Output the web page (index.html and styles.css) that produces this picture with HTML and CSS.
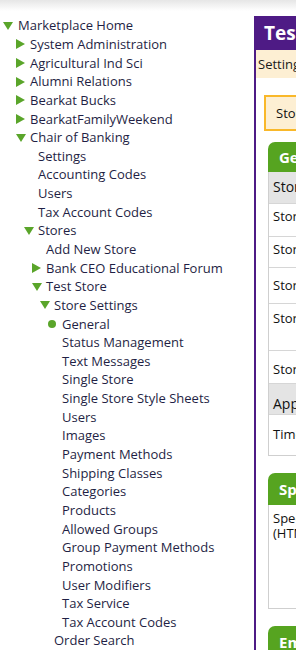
FILE: index.html
```html
<!DOCTYPE html>
<html>
<head>
<meta charset="utf-8">
<link rel="stylesheet" href="styles.css">
</head>
<body>
<div class="page">
  <nav class="sidebar">
    <ul class="tree">
      <li class="open"><span class="node"><i class="ico down"></i>Marketplace Home</span>
        <ul class="lvl1">
          <li><span class="node"><i class="ico right"></i>System Administration</span></li>
          <li><span class="node"><i class="ico right"></i>Agricultural Ind Sci</span></li>
          <li><span class="node"><i class="ico right"></i>Alumni Relations</span></li>
          <li><span class="node"><i class="ico right"></i>Bearkat Bucks</span></li>
          <li><span class="node"><i class="ico right"></i>BearkatFamilyWeekend</span></li>
          <li><span class="node"><i class="ico down"></i>Chair of Banking</span>
            <ul>
              <li><span class="node"><i class="ico"></i>Settings</span></li>
              <li><span class="node"><i class="ico"></i>Accounting Codes</span></li>
              <li><span class="node"><i class="ico"></i>Users</span></li>
              <li><span class="node"><i class="ico"></i>Tax Account Codes</span></li>
              <li><span class="node"><i class="ico down"></i>Stores</span>
                <ul>
                  <li><span class="node"><i class="ico"></i>Add New Store</span></li>
                  <li><span class="node"><i class="ico right"></i>Bank CEO Educational Forum</span></li>
                  <li><span class="node"><i class="ico down"></i>Test Store</span>
                    <ul>
                      <li><span class="node"><i class="ico down"></i>Store Settings</span>
                        <ul>
                          <li><span class="node"><i class="ico dot"></i>General</span></li>
                          <li><span class="node"><i class="ico"></i>Status Management</span></li>
                          <li><span class="node"><i class="ico"></i>Text Messages</span></li>
                          <li><span class="node"><i class="ico"></i>Single Store</span></li>
                          <li><span class="node"><i class="ico"></i>Single Store Style Sheets</span></li>
                          <li><span class="node"><i class="ico"></i>Users</span></li>
                          <li><span class="node"><i class="ico"></i>Images</span></li>
                          <li><span class="node"><i class="ico"></i>Payment Methods</span></li>
                          <li><span class="node"><i class="ico"></i>Shipping Classes</span></li>
                          <li><span class="node"><i class="ico"></i>Categories</span></li>
                          <li><span class="node"><i class="ico"></i>Products</span></li>
                          <li><span class="node"><i class="ico"></i>Allowed Groups</span></li>
                          <li><span class="node"><i class="ico"></i>Group Payment Methods</span></li>
                          <li><span class="node"><i class="ico"></i>Promotions</span></li>
                          <li><span class="node"><i class="ico"></i>User Modifiers</span></li>
                          <li><span class="node"><i class="ico"></i>Tax Service</span></li>
                          <li><span class="node"><i class="ico"></i>Tax Account Codes</span></li>
                        </ul>
                      </li>
                      <li><span class="node"><i class="ico"></i>Order Search</span></li>
                    </ul>
                  </li>
                </ul>
              </li>
            </ul>
          </li>
        </ul>
      </li>
    </ul>
  </nav>

  <main class="panel">
    <h1 class="panel-title">Test Store</h1>
    <div class="crumbs">Settings &gt; General</div>
    <div class="content">
      <div class="notice">Store settings have been saved.</div>

      <section class="group">
        <h2 class="tab">General</h2>
        <div class="box">
          <div class="row head h31">Store Information</div>
          <div class="row h33">Store Name</div>
          <div class="row h31">Store Status</div>
          <div class="row h36">Store Email Address</div>
          <div class="row h47">Store Description</div>
          <div class="row h33 low">Store URL</div>
          <div class="row head h31 low">Appearance</div>
          <div class="row h41 mid">Time Zone</div>
        </div>
      </section>

      <section class="group">
        <h2 class="tab">Special Instructions</h2>
        <div class="box tall">
          <div class="label">Special Instructions<br>(HTML)</div>
        </div>
      </section>

      <section class="group">
        <h2 class="tab">Email Settings</h2>
      </section>
    </div>
  </main>
</div>
</body>
</html>
```

FILE: styles.css
```css
html, body {
  margin: 0;
  padding: 0;
}
body {
  width: 296px;
  height: 650px;
  overflow: hidden;
  background: linear-gradient(#e6e6e6, #ffffff 11px) no-repeat, #ffffff;
}
.page {
  display: flex;
  width: 900px;
  align-items: flex-start;
}
.sidebar {
  width: 254px;
  flex: none;
  padding-top: 16px;
  font-family: "Open Sans", sans-serif;
  font-size: 13px;
  color: #1f1f45;
}
.tree, .tree ul {
  list-style: none;
  margin: 0;
  padding: 0 0 0 8px;
}
.tree {
  padding-left: 3px;
}
.tree .lvl1 {
  padding-left: 13px;
}
.node {
  display: flex;
  align-items: center;
  height: 18.65px;
  white-space: nowrap;
}
.ico {
  width: 14px;
  flex: none;
  display: flex;
  align-items: center;
}
.tree > li > .node .ico {
  width: 15px;
}
.ico.down::before {
  content: "";
  border-left: 5px solid transparent;
  border-right: 5px solid transparent;
  border-top: 8px solid #5aa52a;
  margin-top: 1px;
}
.ico.right::before {
  content: "";
  border-top: 5px solid transparent;
  border-bottom: 5px solid transparent;
  border-left: 9px solid #5aa52a;
  margin-top: 1px;
}
.ico.dot::before {
  content: "";
  width: 8px;
  height: 8px;
  border-radius: 50%;
  background: #5aa52a;
  margin-top: 1px;
}

.panel {
  flex: none;
  width: 600px;
  margin-top: 16px;
  border-left: 2px solid #4e1b85;
  min-height: 700px;
  font-family: "Open Sans", sans-serif;
  font-size: 13px;
  color: #111;
}
.panel-title {
  margin: 0;
  height: 34px;
  box-sizing: border-box;
  padding: 5px 0 0 8px;
  background: #4e1b85;
  color: #fff;
  font-size: 19px;
  font-weight: bold;
  line-height: 24px;
}
.crumbs {
  height: 28px;
  box-sizing: border-box;
  padding: 5px 0 0 2px;
  line-height: 18px;
  background: #fdefd3;
  color: #1a1a1a;
}
.content {
  padding: 17px 0 0 8px;
}
.notice {
  height: 36px;
  box-sizing: border-box;
  border: 2px solid #f9b82a;
  background: #fdefd3;
  padding: 7px 0 0 10px;
  line-height: 18px;
}
.group {
  margin: 11px 0 0 4px;
}
.group + .group {
  margin-top: 17px;
}
.tab {
  margin: 0;
  height: 30px;
  box-sizing: border-box;
  background: #56a420;
  border-radius: 7px 7px 0 0;
  color: #fff;
  font-size: 15px;
  font-weight: bold;
  padding: 5px 0 0 11px;
  line-height: 20px;
}
.group + .group .tab {
  height: 32px;
  padding-top: 6px;
}
.box {
  border: 1px solid #cfcfcf;
  border-top: none;
}
.row {
  box-sizing: border-box;
  border-top: 1px solid #d6d6d6;
  padding: 4px 0 0 4px;
  line-height: 16px;
  white-space: nowrap;
}
.row:first-child {
  border-top: none;
}
.row.head {
  background: #e4e4e4;
  font-size: 14px;
  padding-top: 7px;
}
.row.mid {
  padding-top: 11px;
}
.h31 { height: 31px; }
.h33 { height: 33px; }
.h36 { height: 36px; padding-top: 9px; }
.h47 { height: 47px; padding-top: 6px; }
.h41 { height: 41px; }
.row.low { padding-top: 10px; }
.row.head.low { padding-top: 12px; }
.box.tall {
  height: 104px;
  box-sizing: border-box;
}
.label {
  width: 150px;
  padding: 6px 0 0 4px;
  line-height: 15px;
}
```
